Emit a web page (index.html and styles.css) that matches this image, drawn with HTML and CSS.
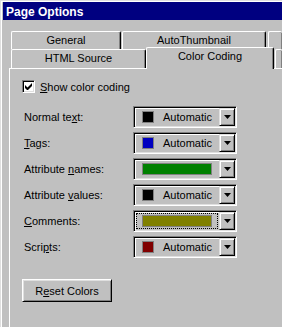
FILE: index.html
```html
<!DOCTYPE html>
<html lang="en">
<head>
    <meta charset="UTF-8">
    <title>Page Options</title>
    <link rel="stylesheet" href="styles.css">
</head>
<body>
    <div class="window">
        <div class="titlebar">Page Options</div>

        <div class="content">
            <!-- back row of tabs -->
            <div class="tabrow back">
                <div class="tab t-general">General</div>
                <div class="tab t-auto">AutoThumbnail</div>
                <div class="tab t-more"></div>
            </div>
            <!-- front row of tabs -->
            <div class="tabrow front">
                <div class="tab t-html">HTML Source</div>
                <div class="tab t-color selected">Color Coding</div>
                <div class="tab t-more"></div>
            </div>

            <div class="panel">
                <label class="check">
                    <span class="checkbox">
                        <svg width="7" height="7" viewBox="0 0 7 7"><path d="M0 2v3l2 2h1l4-4V0L2.5 4.5z" fill="#000"/></svg>
                    </span>
                    <span><u>S</u>how color coding</span>
                </label>

                <div class="fields">
                    <span class="label">Normal te<u>x</u>t:</span>
                    <div class="combo">
                        <div class="field"><span class="swatch black"></span><span class="value">Automatic</span></div>
                        <div class="drop"><svg width="7" height="4" viewBox="0 0 7 4"><path d="M0 0h7L3.5 4z" fill="#000"/></svg></div>
                    </div>

                    <span class="label"><u>T</u>ags:</span>
                    <div class="combo">
                        <div class="field"><span class="swatch blue"></span><span class="value">Automatic</span></div>
                        <div class="drop"><svg width="7" height="4" viewBox="0 0 7 4"><path d="M0 0h7L3.5 4z" fill="#000"/></svg></div>
                    </div>

                    <span class="label">Attribute <u>n</u>ames:</span>
                    <div class="combo">
                        <div class="field"><span class="bar green"></span></div>
                        <div class="drop"><svg width="7" height="4" viewBox="0 0 7 4"><path d="M0 0h7L3.5 4z" fill="#000"/></svg></div>
                    </div>

                    <span class="label">Attribute <u>v</u>alues:</span>
                    <div class="combo">
                        <div class="field"><span class="swatch black"></span><span class="value">Automatic</span></div>
                        <div class="drop"><svg width="7" height="4" viewBox="0 0 7 4"><path d="M0 0h7L3.5 4z" fill="#000"/></svg></div>
                    </div>

                    <span class="label"><u>C</u>omments:</span>
                    <div class="combo">
                        <div class="field focus"><span class="bar olive"></span></div>
                        <div class="drop"><svg width="7" height="4" viewBox="0 0 7 4"><path d="M0 0h7L3.5 4z" fill="#000"/></svg></div>
                    </div>

                    <span class="label">Scri<u>p</u>ts:</span>
                    <div class="combo">
                        <div class="field"><span class="swatch maroon"></span><span class="value">Automatic</span></div>
                        <div class="drop"><svg width="7" height="4" viewBox="0 0 7 4"><path d="M0 0h7L3.5 4z" fill="#000"/></svg></div>
                    </div>
                </div>

                <button class="reset">R<u>e</u>set Colors</button>
            </div>
        </div>
    </div>
</body>
</html>
```

FILE: styles.css
```css
body {
    margin: 0;
    background-color: #c0c0c0;
    font-family: "Liberation Sans", Arial, sans-serif;
    font-size: 11px;
    color: #000;
    overflow: hidden;
}

u {
    text-decoration: underline;
    text-underline-offset: 1px;
}

.window {
    box-sizing: border-box;
    width: 282px;
    height: 327px;
    overflow: hidden;
    border-top: 1px solid #dfdfdf;
    border-left: 1px solid #dfdfdf;
    box-shadow: inset 1px 1px #fff;
    padding: 1px 0 0 2px;
}

.titlebar {
    height: 18px;
    background-color: #000080;
    color: #fff;
    font-weight: bold;
    font-size: 12px;
    line-height: 20px;
    padding-left: 3px;
    white-space: nowrap;
}

.content {
    padding: 11px 0 0 6px;
}

/* tabs */
.tabrow {
    display: flex;
    align-items: flex-start;
    margin-left: 2px;
    white-space: nowrap;
}

.tabrow.back {
    height: 18px;
}

.tabrow.front {
    height: 19px;
}

.tab {
    box-sizing: border-box;
    height: 100%;
    border: 1px solid;
    border-color: #fff #000 transparent #fff;
    border-bottom: none;
    border-radius: 2px 2px 0 0;
    box-shadow: inset -1px 0 #808080;
    text-align: center;
    line-height: 17px;
}

.t-general { width: 110px; }
.t-auto { width: 144px; margin-left: 1px; }
.back .t-more { flex: 1; margin-left: 2px; border-right: none; }

.t-html { width: 135px; }
.t-color { width: 128px; }
.front .t-more { flex: 1; margin-left: 1px; border-right: none; }

.tab.selected {
    position: relative;
    z-index: 1;
    height: 22px;
    margin-top: -2px;
    background-color: #c0c0c0;
}

/* panel */
.panel {
    box-sizing: border-box;
    height: 259px;
    border-top: 1px solid #fff;
    border-left: 1px solid #fff;
    padding: 11px 0 0 12px;
}

.check {
    display: flex;
    align-items: center;
    gap: 5px;
}

.checkbox {
    box-sizing: border-box;
    width: 13px;
    height: 13px;
    display: flex;
    align-items: center;
    justify-content: center;
    background-color: #fff;
    border: 1px solid;
    border-color: #808080 #fff #fff #808080;
    box-shadow: inset 1px 1px #000, inset -1px -1px #dfdfdf;
}

.fields {
    display: grid;
    grid-template-columns: 111px 104px;
    grid-auto-rows: 22px;
    row-gap: 4px;
    align-items: center;
    margin-top: 13px;
}

.label {
    padding-left: 2px;
}

.combo {
    box-sizing: border-box;
    height: 22px;
    display: flex;
    padding: 1px;
    border: 1px solid;
    border-color: #808080 #fff #fff #808080;
    box-shadow: inset 1px 1px #000, inset -1px -1px #dfdfdf;
}

.field {
    flex: 1;
    display: flex;
    align-items: center;
    padding-left: 7px;
    box-shadow: inset 1px 1px #fff;
}

.field.focus {
    outline: 1px dotted #000;
    outline-offset: -2px;
}

.swatch {
    box-sizing: border-box;
    width: 12px;
    height: 12px;
    border: 1px solid #808080;
}

.value {
    margin-left: 9px;
}

.bar {
    box-sizing: border-box;
    width: 70px;
    height: 12px;
    border: 1px solid #808080;
}

.black { background-color: #000; }
.blue { background-color: #0000c0; }
.maroon { background-color: #800000; }
.green { background-color: #008000; }
.olive { background-color: #808000; }

.drop {
    box-sizing: border-box;
    width: 16px;
    display: flex;
    align-items: center;
    justify-content: center;
    border: 1px solid;
    border-color: #dfdfdf #000 #000 #dfdfdf;
    box-shadow: inset 1px 1px #fff, inset -1px -1px #808080;
}

.reset {
    box-sizing: border-box;
    width: 90px;
    height: 23px;
    margin-top: 21px;
    padding: 0;
    font-family: inherit;
    font-size: 11px;
    color: #000;
    background-color: #c0c0c0;
    border: 1px solid;
    border-color: #fff #000 #000 #fff;
    box-shadow: inset 1px 1px #dfdfdf, inset -1px -1px #808080;
}
```
